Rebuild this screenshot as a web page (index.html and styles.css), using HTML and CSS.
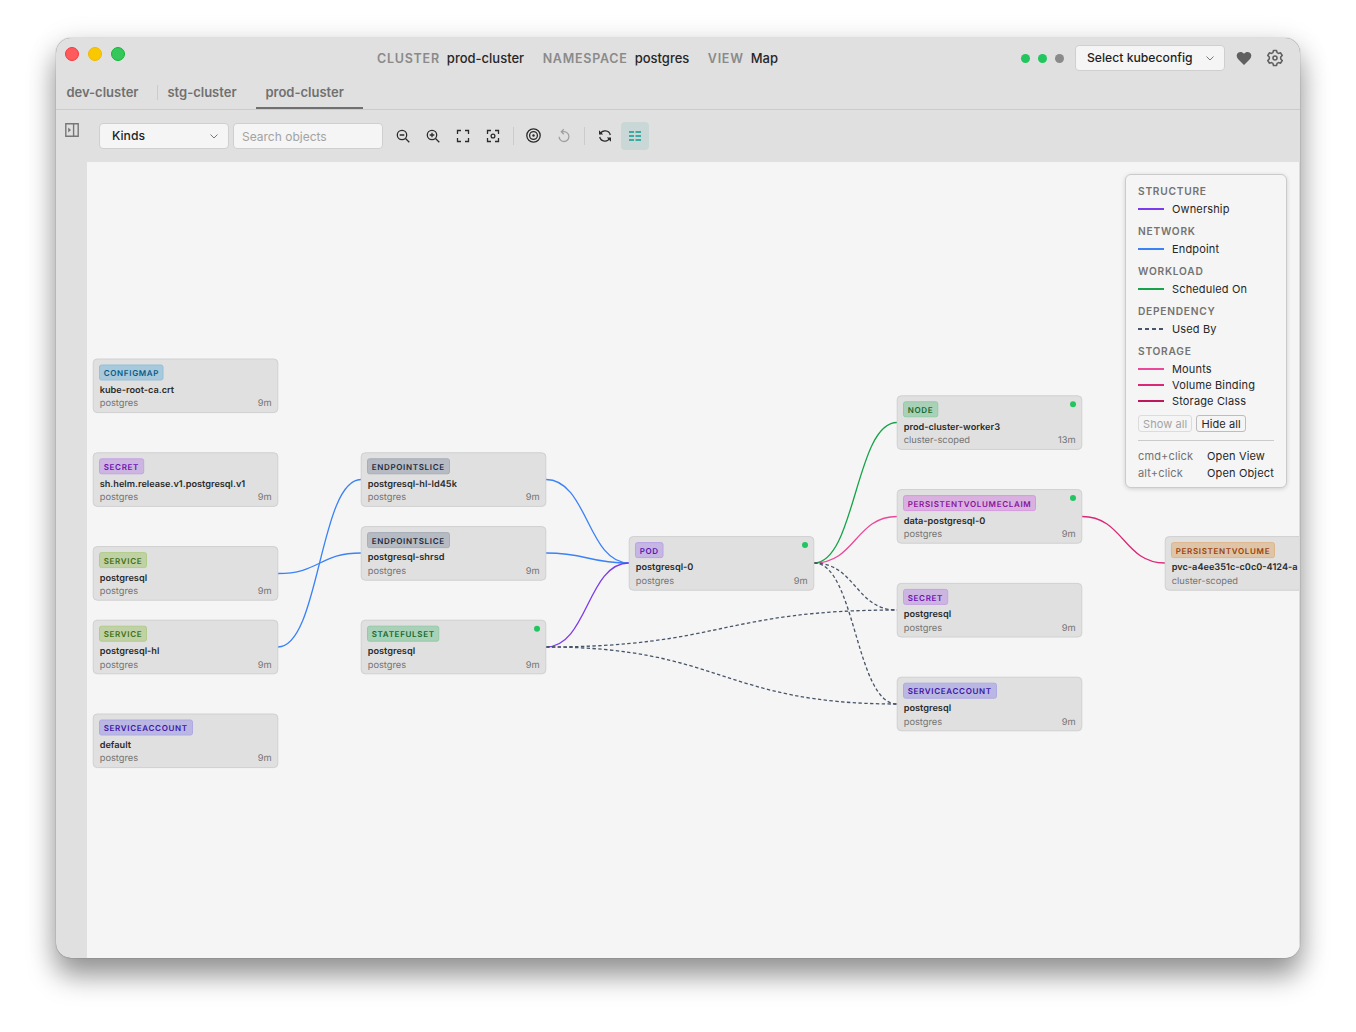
FILE: index.html
```html
<!DOCTYPE html>
<html lang="en">
<head>
  <meta charset="UTF-8" />
  <meta name="viewport" content="width=device-width, initial-scale=1.0" />
  <title>prod-cluster - Map</title>
  <link rel="stylesheet" href="styles.css">
</head>
<body>
  <div class="window">
    <header class="titlebar">
      <div class="lights">
        <span class="light red"></span>
        <span class="light yellow"></span>
        <span class="light green"></span>
      </div>
      <div class="context">
        <span class="label">CLUSTER</span><span class="value">prod-cluster</span>
        <span class="label">NAMESPACE</span><span class="value">postgres</span>
        <span class="label">VIEW</span><span class="value">Map</span>
      </div>
      <div class="header-right">
        <span class="status ok"></span>
        <span class="status ok"></span>
        <span class="status"></span>
        <button class="select kubeconfig">Select kubeconfig
          <svg class="chevron" viewBox="0 0 10 10"><path d="M1.5 3.5 5 7l3.5-3.5" /></svg>
        </button>
        <svg class="heart" viewBox="0 0 16 16"><path d="M8 15 1.6 8.5C-.4 6.3-.2 3.4 1.7 1.9 3.6.4 6.3.8 8 3c1.7-2.2 4.4-2.6 6.3-1.1 1.9 1.5 2.1 4.4.1 6.6z" /></svg>
        <svg class="gear" viewBox="0 0 18 18">
          <path d="M7.5 1.5h3l.6 2.1 1.4.8 2.1-.6 1.6 2.7L14.7 8v2l1.5 1.5-1.6 2.7-2.1-.6-1.4.8-.6 2.1h-3l-.6-2.1-1.4-.8-2.1.6-1.6-2.7L3.3 10V8L1.8 6.5l1.6-2.7 2.1.6 1.4-.8z" />
          <circle cx="9" cy="9" r="2" />
        </svg>
      </div>
    </header>

    <nav class="tabs">
      <div class="tab">dev-cluster</div>
      <div class="tab second">stg-cluster</div>
      <div class="tab active">prod-cluster</div>
    </nav>

    <div class="body">
      <aside class="sidebar">
        <svg viewBox="0 0 14 14"><path d="M.8.8h12.4v12.4H.8zM8.6.8v12.4" /><path class="solid" d="M3.2 4.5 6 7 3.2 9.5z" /></svg>
      </aside>

      <main class="content">
        <div class="toolbar">
          <button class="select kinds">Kinds
            <svg class="chevron" viewBox="0 0 10 10"><path d="M1.5 3.5 5 7l3.5-3.5" /></svg>
          </button>
          <input class="search" type="text" placeholder="Search objects" />
          <button class="tool first"><svg viewBox="0 0 16 16"><circle cx="7" cy="7" r="4.7" /><path d="m10.5 10.5 3.8 3.8M4.7 7h4.6" /></svg></button>
          <button class="tool"><svg viewBox="0 0 16 16"><circle cx="7" cy="7" r="4.7" /><path d="m10.5 10.5 3.8 3.8M4.7 7h4.6M7 4.7v4.6" /></svg></button>
          <button class="tool"><svg viewBox="0 0 16 16"><path d="M2.5 6V2.5H6M10 2.5h3.5V6M13.5 10v3.5H10M6 13.5H2.5V10" /></svg></button>
          <button class="tool"><svg viewBox="0 0 16 16"><path d="M2.5 6V2.5H6M10 2.5h3.5V6M13.5 10v3.5H10M6 13.5H2.5V10" /><circle cx="8" cy="8" r="1.9" /></svg></button>
          <span class="separator"></span>
          <button class="tool"><svg viewBox="0 0 16 16"><circle cx="7.5" cy="7.5" r="6.7" /><circle cx="7.5" cy="7.5" r="3.9" /><circle class="solid" cx="7.5" cy="7.5" r="1.2" /></svg></button>
          <button class="tool disabled"><svg viewBox="0 0 16 16"><path d="M5.5 3.7H8a4.9 4.9 0 1 1-4.9 5" /><path d="M7.8 1.3 5.3 3.7l2.5 2.6" /></svg></button>
          <span class="separator"></span>
          <button class="tool"><svg viewBox="0 0 16 16"><path d="M3.2 6A5.4 5.4 0 0 1 13.3 7M12.8 10A5.4 5.4 0 0 1 2.7 9" /><path class="solid" d="M2 2.3v4.2h4.2zM14 13.7V9.5H9.8z" /></svg></button>
          <button class="tool on"><svg viewBox="0 0 16 16"><path d="M2 4h5M8.5 4H14M2 8h5M8.5 8H14M2 12h5M8.5 12H14" /></svg></button>
        </div>

        <div class="map">
          <svg class="graph" viewBox="0 0 1213 796">
            <g class="edges">
              <path class="endpoint" d="M191 411.5C232.5 411.5 232.5 391 274 391" />
              <path class="endpoint" d="M191 485C232.5 485 232.5 317.5 274 317.5" />
              <path class="endpoint" d="M459 317.5C500.5 317.5 500.5 401 542 401" />
              <path class="endpoint" d="M459 391C500.5 391 500.5 401 542 401" />
              <path class="ownership" d="M459 485C500.5 485 500.5 401 542 401" />
              <path class="used-by" d="M459 485C634.5 485 634.5 448 810 448" />
              <path class="used-by" d="M459 485C634.5 485 634.5 542 810 542" />
              <path class="mounts" d="M727 401C768.5 401 768.5 354.5 810 354.5" />
              <path class="scheduled" d="M727 401C768.5 401 768.5 260.5 810 260.5" />
              <path class="used-by" d="M727 401C768.5 401 768.5 448 810 448" />
              <path class="used-by" d="M727 401C768.5 401 768.5 542 810 542" />
              <path class="binding" d="M995 354.5C1036.5 354.5 1036.5 401 1078 401" />
            </g>

            <g class="node configmap" transform="translate(6.2 197)">
              <rect class="card" width="184.6" height="53.6" rx="4" />
              <rect class="badge" x="6.3" y="6" width="63.5" height="15" rx="2" />
              <text class="kind" x="10.5" y="17">CONFIGMAP</text>
              <text class="name" x="6.5" y="34">kube-root-ca.crt</text>
              <text class="meta" x="6.5" y="47">postgres</text>
              <text class="age" x="178.5" y="47">9m</text>
            </g>
            <g class="node secret" transform="translate(6.2 290.8)">
              <rect class="card" width="184.6" height="53.6" rx="4" />
              <rect class="badge" x="6.3" y="6" width="44.2" height="15" rx="2" />
              <text class="kind" x="10.5" y="17">SECRET</text>
              <text class="name" x="6.5" y="34">sh.helm.release.v1.postgresql.v1</text>
              <text class="meta" x="6.5" y="47">postgres</text>
              <text class="age" x="178.5" y="47">9m</text>
            </g>
            <g class="node service" transform="translate(6.2 384.6)">
              <rect class="card" width="184.6" height="53.6" rx="4" />
              <rect class="badge" x="6.3" y="6" width="47" height="15" rx="2" />
              <text class="kind" x="10.5" y="17">SERVICE</text>
              <text class="name" x="6.5" y="34">postgresql</text>
              <text class="meta" x="6.5" y="47">postgres</text>
              <text class="age" x="178.5" y="47">9m</text>
            </g>
            <g class="node service" transform="translate(6.2 458.2)">
              <rect class="card" width="184.6" height="53.6" rx="4" />
              <rect class="badge" x="6.3" y="6" width="47" height="15" rx="2" />
              <text class="kind" x="10.5" y="17">SERVICE</text>
              <text class="name" x="6.5" y="34">postgresql-hl</text>
              <text class="meta" x="6.5" y="47.4">postgres</text>
              <text class="age" x="178.5" y="47.4">9m</text>
            </g>
            <g class="node serviceaccount" transform="translate(6.2 552)">
              <rect class="card" width="184.6" height="53.6" rx="4" />
              <rect class="badge" x="6.3" y="6" width="93" height="15" rx="2" />
              <text class="kind" x="10.5" y="17">SERVICEACCOUNT</text>
              <text class="name" x="6.5" y="34">default</text>
              <text class="meta" x="6.5" y="47">postgres</text>
              <text class="age" x="178.5" y="47">9m</text>
            </g>

            <g class="node endpointslice" transform="translate(274.2 290.8)">
              <rect class="card" width="184.6" height="53.6" rx="4" />
              <rect class="badge" x="6.3" y="6" width="82" height="15" rx="2" />
              <text class="kind" x="10.5" y="17">ENDPOINTSLICE</text>
              <text class="name" x="6.5" y="34">postgresql-hl-ld45k</text>
              <text class="meta" x="6.5" y="47">postgres</text>
              <text class="age" x="178.5" y="47">9m</text>
            </g>
            <g class="node endpointslice" transform="translate(274.2 364.6)">
              <rect class="card" width="184.6" height="53.6" rx="4" />
              <rect class="badge" x="6.3" y="6" width="82" height="15" rx="2" />
              <text class="kind" x="10.5" y="17">ENDPOINTSLICE</text>
              <text class="name" x="6.5" y="33.4">postgresql-shrsd</text>
              <text class="meta" x="6.5" y="47">postgres</text>
              <text class="age" x="178.5" y="47">9m</text>
            </g>
            <g class="node workload" transform="translate(274.2 458.2)">
              <rect class="card" width="184.6" height="53.6" rx="4" />
              <rect class="badge" x="6.3" y="6" width="71.3" height="15" rx="2" />
              <text class="kind" x="10.5" y="17">STATEFULSET</text>
              <text class="name" x="6.5" y="34">postgresql</text>
              <text class="meta" x="6.5" y="47.4">postgres</text>
              <text class="age" x="178.5" y="47.4">9m</text>
              <circle class="ready" cx="175.8" cy="8.5" r="3" />
            </g>

            <g class="node pod" transform="translate(542.2 374.6)">
              <rect class="card" width="184.6" height="53.6" rx="4" />
              <rect class="badge" x="6.3" y="6" width="27.5" height="15" rx="2" />
              <text class="kind" x="10.5" y="17">POD</text>
              <text class="name" x="6.5" y="33.4">postgresql-0</text>
              <text class="meta" x="6.5" y="47">postgres</text>
              <text class="age" x="178.5" y="47">9m</text>
              <circle class="ready" cx="175.8" cy="8.5" r="3" />
            </g>

            <g class="node workload" transform="translate(810.2 233.8)">
              <rect class="card" width="184.6" height="53.6" rx="4" />
              <rect class="badge" x="6.3" y="6" width="34.3" height="15" rx="2" />
              <text class="kind" x="10.5" y="17">NODE</text>
              <text class="name" x="6.5" y="34">prod-cluster-worker3</text>
              <text class="meta" x="6.5" y="47">cluster-scoped</text>
              <text class="age" x="178.5" y="47">13m</text>
              <circle class="ready" cx="175.8" cy="8.5" r="3" />
            </g>
            <g class="node pvc" transform="translate(810.2 327.6)">
              <rect class="card" width="184.6" height="53.6" rx="4" />
              <rect class="badge" x="6.3" y="6" width="132" height="15" rx="2" />
              <text class="kind" x="10.5" y="17">PERSISTENTVOLUMECLAIM</text>
              <text class="name" x="6.5" y="34">data-postgresql-0</text>
              <text class="meta" x="6.5" y="47">postgres</text>
              <text class="age" x="178.5" y="47">9m</text>
              <circle class="ready" cx="175.8" cy="8.5" r="3" />
            </g>
            <g class="node secret" transform="translate(810.2 421.4)">
              <rect class="card" width="184.6" height="53.6" rx="4" />
              <rect class="badge" x="6.3" y="6" width="44.2" height="15" rx="2" />
              <text class="kind" x="10.5" y="17.2">SECRET</text>
              <text class="name" x="6.5" y="34">postgresql</text>
              <text class="meta" x="6.5" y="47.4">postgres</text>
              <text class="age" x="178.5" y="47.4">9m</text>
            </g>
            <g class="node serviceaccount" transform="translate(810.2 515.2)">
              <rect class="card" width="184.6" height="53.6" rx="4" />
              <rect class="badge" x="6.3" y="6" width="93" height="15" rx="2" />
              <text class="kind" x="10.5" y="17">SERVICEACCOUNT</text>
              <text class="name" x="6.5" y="34">postgresql</text>
              <text class="meta" x="6.5" y="47.4">postgres</text>
              <text class="age" x="178.5" y="47.4">9m</text>
            </g>

            <g class="node pv" transform="translate(1078.2 374.6)">
              <rect class="card" width="184.6" height="53.6" rx="4" />
              <rect class="badge" x="6.3" y="6" width="103" height="15" rx="2" />
              <text class="kind" x="10.5" y="17">PERSISTENTVOLUME</text>
              <text class="name" x="6.5" y="33.4">pvc-a4ee351c-c0c0-4124-a</text>
              <text class="meta" x="6.5" y="47">cluster-scoped</text>
            </g>
          </svg>

          <div class="legend">
            <h4>STRUCTURE</h4>
            <div class="item"><span class="line ownership"></span>Ownership</div>
            <h4>NETWORK</h4>
            <div class="item"><span class="line endpoint"></span>Endpoint</div>
            <h4>WORKLOAD</h4>
            <div class="item"><span class="line scheduled"></span>Scheduled On</div>
            <h4>DEPENDENCY</h4>
            <div class="item"><span class="line used-by"></span>Used By</div>
            <h4>STORAGE</h4>
            <div class="item"><span class="line mounts"></span>Mounts</div>
            <div class="item"><span class="line binding"></span>Volume Binding</div>
            <div class="item"><span class="line storage-class"></span>Storage Class</div>
            <div class="legend-buttons">
              <button disabled>Show all</button>
              <button>Hide all</button>
            </div>
            <div class="hints">
              <span class="key">cmd+click</span><span>Open View</span>
              <span class="key">alt+click</span><span>Open Object</span>
            </div>
          </div>
        </div>
      </main>
    </div>
  </div>
</body>
</html>
```
FILE: styles.css
```css
* {
  box-sizing: border-box;
}

body {
  margin: 0;
  height: 1032px;
  padding: 38px 56px 74px;
  background-color: #fff;
  font-family: Inter, "Liberation Sans", sans-serif;
  font-size: 13px;
  color: #262626;
  overflow: hidden;
}

button,
input {
  font-family: inherit;
  margin: 0;
}

.window {
  display: flex;
  flex-direction: column;
  width: 1244px;
  height: 920px;
  background-color: #e0e0e0;
  border-radius: 15px;
  overflow: hidden;
  box-shadow: 0 0 1px rgba(0, 0, 0, 0.6), 0 18px 28px rgba(0, 0, 0, 0.38), 0 4px 30px rgba(0, 0, 0, 0.12);
}

/* Title bar */
.titlebar {
  display: flex;
  align-items: center;
  height: 40px;
  padding: 0 16px 0 9px;
}

.lights {
  display: flex;
  gap: 9px;
  margin-bottom: 8px;
}

.light {
  width: 14px;
  height: 14px;
  border-radius: 50%;
  border: 1px solid;
}

.light.red {
  background-color: #ff5a5c;
  border-color: #f5393f;
}

.light.yellow {
  background-color: #fac800;
  border-color: #edb900;
}

.light.green {
  background-color: #34c759;
  border-color: #16b43b;
}

.context {
  display: flex;
  align-items: baseline;
  margin-left: 252px;
  padding-top: 1px;
  line-height: 16px;
}

.label {
  font-size: 12.5px;
  font-weight: 600;
  letter-spacing: 0.75px;
  color: #8a8a8a;
  margin-right: 7px;
}

.value {
  font-weight: 500;
  margin-right: 18.5px;
}

.header-right {
  display: flex;
  align-items: center;
  margin-left: auto;
}

.status {
  width: 9px;
  height: 9px;
  margin-right: 8px;
  border-radius: 50%;
  background-color: #8a8a8a;
}

.status.ok {
  background-color: #22c55e;
}

.select {
  display: flex;
  align-items: center;
  justify-content: space-between;
  height: 26px;
  background-color: #f5f5f5;
  border: 1px solid #cfcfcf;
  border-radius: 4px;
  font-size: 12.2px;
  font-weight: 500;
  color: #1f1f1f;
  padding: 0 9px 1px 12px;
}

.kubeconfig {
  width: 150px;
  margin-left: 3px;
  padding-left: 11px;
}

.chevron {
  width: 10px;
  height: 10px;
  fill: none;
  stroke: #777;
  stroke-width: 1;
}

.heart {
  width: 16px;
  height: 15px;
  margin-left: 11px;
  fill: #606060;
}

.gear {
  width: 18px;
  height: 18px;
  margin-left: 14px;
  fill: none;
  stroke: #606060;
  stroke-width: 1.6;
  stroke-linejoin: round;
}

/* Tabs */
.tabs {
  display: flex;
  height: 32px;
  border-bottom: 1px solid #cbcbcb;
}

.tab {
  height: 31px;
  width: 101px;
  padding-left: 10.4px;
  line-height: 29px;
  font-weight: 600;
  color: #707070;
}

.tab.second {
  width: 99px;
  background: linear-gradient(#cbcbcb, #cbcbcb) 0 7px / 1px 15px no-repeat;
}

.tab.active {
  width: 107px;
  padding-left: 9.4px;
  border-bottom: 2px solid #707070;
}

/* Main area */
.body {
  display: flex;
  flex: 1;
}

.sidebar {
  flex: none;
  width: 31px;
  padding: 13px 0 0 9px;
}

.sidebar svg {
  display: block;
  width: 14px;
  height: 14px;
  fill: none;
  stroke: #767676;
  stroke-width: 1.4;
}

.sidebar .solid {
  fill: #767676;
  stroke: none;
}

.content {
  display: flex;
  flex-direction: column;
  flex: 1;
  min-width: 0;
}

.toolbar {
  display: flex;
  align-items: center;
  height: 52px;
  padding-left: 12px;
}

.kinds {
  width: 130px;
}

.search {
  width: 150px;
  height: 26px;
  margin-left: 4px;
  padding: 0 8px;
  background-color: #f5f5f5;
  border: 1px solid #cfcfcf;
  border-radius: 4px;
  font-size: 12px;
}

.search::placeholder {
  color: #a3a3a3;
}

.tool {
  display: flex;
  align-items: center;
  justify-content: center;
  width: 28px;
  height: 28px;
  padding: 0;
  margin-right: 2px;
  background: none;
  border: none;
  border-radius: 4px;
}

.tool.first {
  margin-left: 6px;
}

.tool svg {
  width: 16px;
  height: 16px;
  fill: none;
  stroke: #2b2b2b;
  stroke-width: 1.3;
}

.tool .solid {
  fill: #2b2b2b;
  stroke: none;
}

.tool.disabled svg {
  stroke: #a0a0a0;
}

.tool.on {
  background-color: #c9d8d7;
}

.tool.on svg {
  stroke: #3aaba2;
  stroke-width: 2;
}

.separator {
  width: 1px;
  height: 18px;
  margin: 0 6px 0 4px;
  background-color: #cbcbcb;
}

/* Map */
.map {
  position: relative;
  flex: 1;
  background-color: #f5f5f5;
  border-right: 1px solid #dcdcdc;
  overflow: hidden;
}

.graph {
  display: block;
  width: 1213px;
  height: 796px;
  text-rendering: geometricPrecision;
}

.edges path {
  fill: none;
  stroke-width: 1.3;
}

.edges .endpoint {
  stroke: #3b82f6;
}

.edges .ownership {
  stroke: #7c3aed;
}

.edges .scheduled {
  stroke: #16a34a;
}

.edges .mounts {
  stroke: #ec4899;
}

.edges .binding {
  stroke: #db2777;
}

.edges .used-by {
  stroke: #475569;
  stroke-dasharray: 3.4 2.4;
}

.card {
  fill: #e0e0e0;
  stroke: #d0d0d0;
}

.kind {
  font-size: 8px;
  font-weight: 600;
  letter-spacing: 0.68px;
}

.name {
  font-size: 9.2px;
  font-weight: 600;
  fill: #2b2b2b;
}

.meta,
.age {
  font-size: 9.3px;
  fill: #737373;
}

.age {
  text-anchor: end;
}

.ready {
  fill: #22c55e;
}

.configmap .badge { fill: #a7c9db; stroke: #93c2da; }
.configmap .kind { fill: #075985; }
.secret .badge { fill: #cdb5e2; stroke: #c4a3e3; }
.secret .kind { fill: #6b10b0; }
.service .badge { fill: #bfd1a5; stroke: #b0cd87; }
.service .kind { fill: #3f6e12; }
.serviceaccount .badge { fill: #bab7e3; stroke: #aeaae4; }
.serviceaccount .kind { fill: #3b13a3; }
.endpointslice .badge { fill: #b6bbc3; stroke: #a7aeb8; }
.endpointslice .kind { fill: #1e293b; }
.workload .badge { fill: #a9d1b7; stroke: #93cba7; }
.workload .kind { fill: #13692f; }
.pod .badge { fill: #c6b6e3; stroke: #baa4e5; }
.pod .kind { fill: #5714b0; }
.pvc .badge { fill: #d9b0df; stroke: #d59ade; }
.pvc .kind { fill: #86109a; }
.pv .badge { fill: #dec5a7; stroke: #deb68a; }
.pv .kind { fill: #9a3f0c; }

/* Legend */
.legend {
  position: absolute;
  top: 12px;
  right: 12px;
  width: 162px;
  height: 314px;
  padding: 8px 12px;
  background-color: #f5f5f5;
  border: 1px solid #cbcbcb;
  border-radius: 6px;
  box-shadow: 0 1px 4px rgba(0, 0, 0, 0.16);
  font-size: 11px;
  letter-spacing: 0.15px;
  color: #262626;
}

.legend h4 {
  margin: 6px 0 2px;
  font-size: 10.2px;
  line-height: 16px;
  font-weight: 600;
  letter-spacing: 0.75px;
  color: #737373;
}

.legend h4:first-child {
  margin-top: 0;
}

.item {
  display: flex;
  align-items: center;
  height: 16px;
}

.line {
  width: 26px;
  margin-right: 8px;
  border-top: 2px solid;
}

.line.ownership { border-color: #7c3aed; }
.line.endpoint { border-color: #3b82f6; }
.line.scheduled { border-color: #16a34a; }
.line.mounts { border-color: #ec4899; }
.line.binding { border-color: #db2777; }
.line.storage-class { border-color: #be185d; }

.line.used-by {
  height: 2px;
  border: none;
  background: repeating-linear-gradient(90deg, #475569 0 4.5px, transparent 4.5px 7px);
}

.legend-buttons {
  display: flex;
  gap: 4px;
  margin-top: 6px;
}

.legend-buttons button {
  height: 17px;
  padding: 1px 4px 0;
  background: none;
  border: 1px solid #bdbdbd;
  border-radius: 3px;
  font-size: 11px;
  line-height: 15px;
  letter-spacing: 0.1px;
  color: #262626;
}

.legend-buttons button:disabled {
  color: #a3a3a3;
  border-color: #dcdcdc;
}

.hints {
  display: grid;
  grid-template-columns: 69px auto;
  margin-top: 8px;
  padding-top: 7px;
  border-top: 1px solid #cbcbcb;
  line-height: 17px;
  white-space: nowrap;
}

.key {
  color: #737373;
}
```
